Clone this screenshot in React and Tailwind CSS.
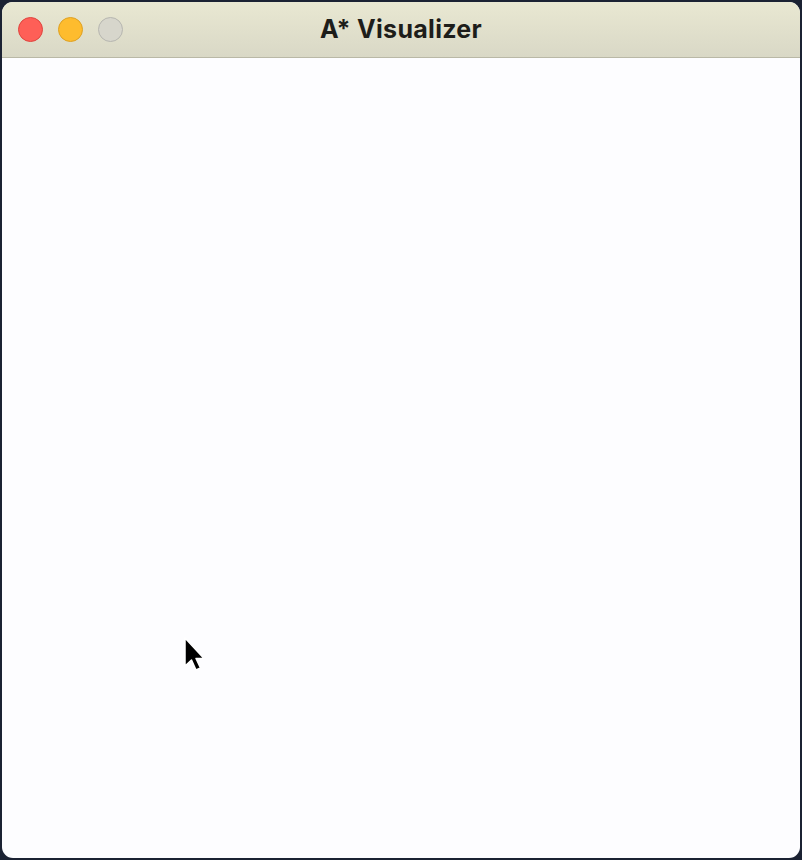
import React from "react";

const App = () => {
  return (
    <div className="w-[802px] h-[860px] bg-[#1b2233] p-[2px]">
      <div className="relative flex h-full flex-col overflow-hidden rounded-[11px] bg-[#fdfdff]">
        {/* title bar */}
        <div className="relative flex h-[56px] shrink-0 items-center border-b border-[#b9b8a6] bg-gradient-to-b from-[#e9e8d2] to-[#d9d8c6] px-[16px]">
          <div className="flex items-center gap-[15px]">
            <span className="h-[25px] w-[25px] rounded-full border border-[#e0443e] bg-[#fe5f57]" />
            <span className="h-[25px] w-[25px] rounded-full border border-[#dea123] bg-[#febc2e]" />
            <span className="h-[25px] w-[25px] rounded-full border border-[#b6b6b0] bg-[#d7d6cc]" />
          </div>
          <div className="absolute inset-0 flex items-center justify-center">
            <span className="font-['Inter','Liberation_Sans',sans-serif] text-[25px] font-bold tracking-[0.3px] text-[#1d1d1a]">
              A* Visualizer
            </span>
          </div>
        </div>
        <div className="flex-1" />
        {/* mouse cursor */}
        <svg
          className="absolute left-[180px] top-[634px]"
          width="26"
          height="38"
          viewBox="0 0 26 38"
        >
          <path
            d="M3 2 L3 30 L9.5 24 L14 34 L18.5 32 L14 22.5 L22 22.5 Z"
            fill="#000"
            stroke="#fff"
            strokeWidth="1.5"
            strokeLinejoin="round"
          />
        </svg>
      </div>
    </div>
  );
};

export default App;
